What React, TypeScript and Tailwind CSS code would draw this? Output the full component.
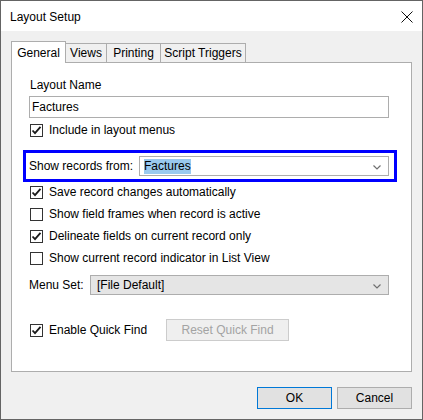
// App.tsx
const font = { fontFamily: '"Liberation Sans", Arial, sans-serif' };

function Check({ checked }: { checked: boolean }) {
  return (
    <span className="flex h-[13px] w-[13px] shrink-0 items-center justify-center border border-[#333333] bg-white">
      {checked && (
        <svg width="11" height="11" viewBox="0 0 11 11">
          <path d="M1.5 5.5 L4 8.2 L9.5 1.8" fill="none" stroke="#1a1a1a" strokeWidth="1.8" />
        </svg>
      )}
    </span>
  );
}

function CheckRow({ label, checked, className = "" }: { label: string; checked: boolean; className?: string }) {
  return (
    <div className={`flex h-[22px] items-center pl-[1px] ${className}`}>
      <Check checked={checked} />
      <span className="ml-[6px]">{label}</span>
    </div>
  );
}

function Chevron() {
  return (
    <svg width="8" height="5" viewBox="0 0 8 5" className="absolute right-[7px] top-[8px]">
      <path d="M0.5 0.5 L4 4 L7.5 0.5" fill="none" stroke="#707070" strokeWidth="1.2" />
    </svg>
  );
}

const tabs = [
  { label: "Views", w: "w-[41px]" },
  { label: "Printing", w: "w-[54px]" },
  { label: "Script Triggers", w: "w-[85px]" },
];

export default function App() {
  return (
    <div style={font} className="flex h-[420px] w-[423px] flex-col border border-[#646464] bg-[#f0f0f0] text-[12px] leading-[16px] text-black">
      <div className="flex h-[30px] items-center justify-between bg-white pl-[9px] pr-[9px]">
        <span className="mt-[1px]">Layout Setup</span>
        <svg width="12" height="12" viewBox="0 0 12 12" className="mt-[1px]">
          <path d="M0.5 0.5 L11.5 11.5 M11.5 0.5 L0.5 11.5" stroke="#111" strokeWidth="1" />
        </svg>
      </div>

      <div className="flex flex-1 flex-col px-[10px] pt-[10px]">
        <div className="flex h-[21px] items-end">
          <div className="relative z-10 -mb-px flex h-[22px] w-[55px] items-center justify-center border border-b-0 border-[#adadad] bg-white">
            General
          </div>
          {tabs.map((t) => (
            <div
              key={t.label}
              className={`flex h-[19px] ${t.w} items-center justify-center whitespace-nowrap border border-b-0 border-l-0 border-[#adadad] bg-[#f0f0f0]`}
            >
              {t.label}
            </div>
          ))}
        </div>

        <div className="flex h-[310px] w-[401px] flex-col border border-[#adadad] bg-white pl-[17px] pt-[14px]">
          <div className="ml-[1px]">Layout Name</div>
          <div className="mt-[3px] flex h-[22px] w-[360px] items-center border border-[#adadad] px-[2px]">Factures</div>
          <CheckRow label="Include in layout menus" checked className="mt-[1px]" />

          <div className="ml-[-6px] mt-[9px] flex h-[32px] w-[374px] items-center border-[3px] border-[#0000ff] pl-[3px]">
            <span>Show records from:</span>
            <div className="relative ml-auto mr-[5px] flex h-[20px] w-[250px] items-center border border-[#adadad] bg-white pl-[4px]">
              <span className="bg-[#99c9ef] leading-[15px]">Factures</span>
              <Chevron />
            </div>
          </div>

          <CheckRow label="Save record changes automatically" checked className="-mt-px" />
          <CheckRow label="Show field frames when record is active" checked={false} />
          <CheckRow label="Delineate fields on current record only" checked />
          <CheckRow label="Show current record indicator in List View" checked={false} />

          <div className="mt-[6px] flex h-[20px] items-center">
            <span>Menu Set:</span>
            <div className="relative ml-auto mr-[22px] flex h-[20px] w-[299px] items-center border border-[#adadad] bg-[#e5e5e5] pl-[6px]">
              [File Default]
              <Chevron />
            </div>
          </div>

          <div className="mt-[24px] flex h-[22px] items-center pl-[1px]">
            <Check checked />
            <span className="ml-[6px]">Enable Quick Find</span>
            <div className="ml-[19px] flex h-[22px] w-[123px] items-center justify-center border border-[#cccccc] bg-[#efefef] text-[#a3a3a3]">
              Reset Quick Find
            </div>
          </div>
        </div>

        <div className="mt-[15px] flex justify-end gap-[5px]">
          <div className="flex h-[22px] w-[75px] items-center justify-center border border-[#0078d7] bg-[#e1e1e1]">OK</div>
          <div className="flex h-[22px] w-[75px] items-center justify-center border border-[#adadad] bg-[#e1e1e1]">Cancel</div>
        </div>
      </div>
    </div>
  );
}
